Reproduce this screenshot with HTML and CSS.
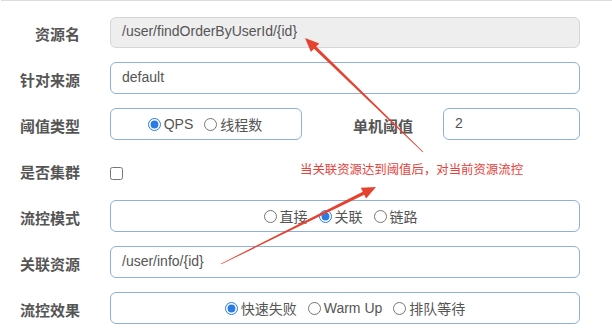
FILE: index.html
```html
<!DOCTYPE html>
<html lang="zh">
<head>
<meta charset="utf-8">
<link rel="stylesheet" href="styles.css">
</head>
<body>
<div class="topline"></div>
<form class="form">
  <div class="row">
    <label class="lbl">资源名</label>
    <div class="field input disabled">/user/findOrderByUserId/{id}</div>
  </div>
  <div class="row">
    <label class="lbl">针对来源</label>
    <div class="field input">default</div>
  </div>
  <div class="row">
    <label class="lbl">阈值类型</label>
    <div class="field box box-narrow">
      <span class="opt"><input type="radio" name="grade" checked><span>QPS</span></span>
      <span class="opt"><input type="radio" name="grade"><span>线程数</span></span>
    </div>
    <label class="lbl lbl-mid">单机阈值</label>
    <div class="field input input-narrow">2</div>
  </div>
  <div class="row row-check">
    <label class="lbl">是否集群</label>
    <div class="check-wrap"><input type="checkbox" class="check"></div>
    <span class="note">当关联资源达到阈值后，对当前资源流控</span>
  </div>
  <div class="row">
    <label class="lbl">流控模式</label>
    <div class="field box box-shift">
      <span class="opt"><input type="radio" name="mode"><span>直接</span></span>
      <span class="opt"><input type="radio" name="mode" checked><span>关联</span></span>
      <span class="opt"><input type="radio" name="mode"><span>链路</span></span>
    </div>
  </div>
  <div class="row">
    <label class="lbl">关联资源</label>
    <div class="field input">/user/info/{id}</div>
  </div>
  <div class="row">
    <label class="lbl">流控效果</label>
    <div class="field box">
      <span class="opt"><input type="radio" name="effect" checked><span>快速失败</span></span>
      <span class="opt"><input type="radio" name="effect"><span>Warm Up</span></span>
      <span class="opt"><input type="radio" name="effect"><span>排队等待</span></span>
    </div>
  </div>
</form>
<svg class="arrows" width="612" height="335" viewBox="0 0 612 335">
  <polygon fill="#e5432f" points="423.28,151.71 316.21,46.55 319.27,43.39 305,38 310.93,52.01 313.99,48.85 422.72,152.29"/>
  <polygon fill="#e5432f" points="221.18,264.36 364.17,194.66 366.13,198.6 376,187 360.79,187.86 362.75,191.8 220.82,263.64"/>
</svg>
</body>
</html>
```
FILE: styles.css
```css
html, body {
  margin: 0;
  padding: 0;
  background: #fff;
}
body {
  width: 612px;
  height: 335px;
  overflow: hidden;
  position: relative;
  font-family: "Liberation Sans", "Noto Sans CJK SC", sans-serif;
  color: #555;
}
.topline {
  height: 1px;
  background: #dcdcdc;
  margin-left: 1px;
}
.form {
  display: flex;
  flex-direction: column;
  gap: 14px;
  padding-top: 15px;
}
.row {
  display: flex;
  align-items: center;
  height: 32px;
}
.lbl {
  width: 80px;
  flex: none;
  text-align: right;
  font-family: "Noto Sans CJK SC", sans-serif;
  font-weight: bold;
  font-size: 15px;
  color: #555;
  padding-top: 4px;
  line-height: 20px;
}
.field {
  box-sizing: border-box;
  height: 32px;
  margin-left: 30px;
  border: 1px solid #8fb0da;
  border-radius: 6px;
  font-size: 14px;
}
.input {
  width: 470px;
  padding: 0 11px;
  display: flex;
  align-items: center;
  padding-bottom: 2px;
}
.disabled {
  background: #eeeeee;
  border-color: #d6d6d6;
  height: 31px;
}
.input-narrow {
  width: 137px;
}
.box {
  width: 470px;
  display: flex;
  justify-content: center;
  align-items: center;
  gap: 11px;
}
.box-shift {
  padding-right: 9px;
}
.box-narrow {
  width: 192px;
  padding-right: 2px;
}
.lbl-mid {
  width: 111px;
}
.opt {
  display: flex;
  align-items: center;
  gap: 3px;
  font-family: "Liberation Sans", "Noto Sans CJK SC", sans-serif;
  font-size: 14px;
  color: #555;
}
.opt input {
  margin: 1px 0 0 0;
  width: 13px;
  height: 13px;
  accent-color: #2a7be6;
}
.row-check {
  align-items: center;
}
.check-wrap {
  margin-left: 30px;
  padding-top: 6px;
  display: flex;
}
.check {
  margin: 0;
  width: 13px;
  height: 13px;
}
.note {
  margin-left: 177px;
  font-family: "Noto Sans CJK SC", sans-serif;
  font-size: 12.4px;
  color: #e6413a;
  padding-bottom: 2px;
}
.arrows {
  position: absolute;
  left: 0;
  top: 0;
  pointer-events: none;
}
```
